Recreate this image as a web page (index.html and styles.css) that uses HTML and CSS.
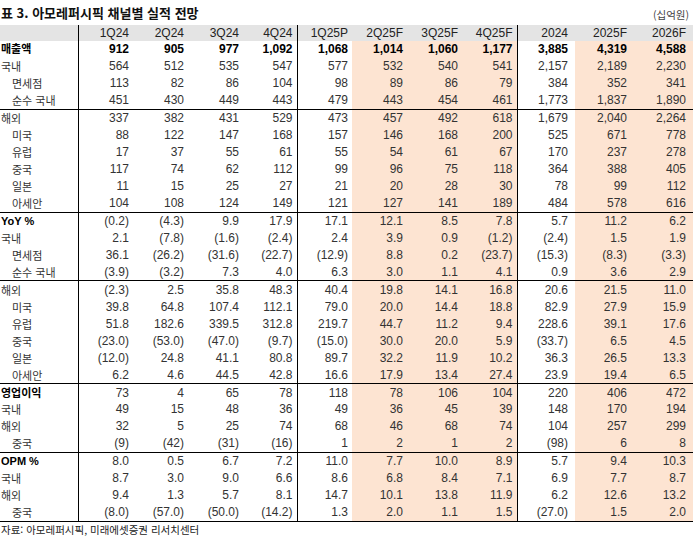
FILE: index.html
```html
<!DOCTYPE html>
<html lang="ko">
<head>
<meta charset="utf-8">
<link rel="stylesheet" href="styles.css">
</head>
<body>
<div class="top">
  <div class="title">표 3. 아모레퍼시픽 채널별 실적 전망</div>
  <div class="unit">(십억원)</div>
</div>
<table class="tbl">
  <colgroup>
    <col class="c-lb"><col class="c-a"><col class="c-a"><col class="c-a"><col class="c-a4">
    <col class="c-a"><col class="c-a"><col class="c-a"><col class="c-a">
    <col class="c-y1"><col class="c-y"><col class="c-y">
  </colgroup>
  <thead>
    <tr><th class="lb vr"></th><th>1Q24</th><th>2Q24</th><th>3Q24</th><th class="vr">4Q24</th><th>1Q25P</th><th>2Q25F</th><th>3Q25F</th><th class="vr">4Q25F</th><th class="yr">2024</th><th class="yr">2025F</th><th class="yr">2026F</th></tr>
  </thead>
  <tbody>
    <tr class="bv"><td class="lb vr b">매출액</td><td>912</td><td>905</td><td>977</td><td class="vr">1,092</td><td>1,068</td><td class="pe">1,014</td><td class="pe">1,060</td><td class="pe vr">1,177</td><td class="yr">3,885</td><td class="pe yr">4,319</td><td class="pe yr">4,588</td></tr>
    <tr><td class="lb vr">국내</td><td>564</td><td>512</td><td>535</td><td class="vr">547</td><td>577</td><td class="pe">532</td><td class="pe">540</td><td class="pe vr">541</td><td class="yr">2,157</td><td class="pe yr">2,189</td><td class="pe yr">2,230</td></tr>
    <tr><td class="lb vr in">면세점</td><td>113</td><td>82</td><td>86</td><td class="vr">104</td><td>98</td><td class="pe">89</td><td class="pe">86</td><td class="pe vr">79</td><td class="yr">384</td><td class="pe yr">352</td><td class="pe yr">341</td></tr>
    <tr class="sep"><td class="lb vr in">순수 국내</td><td>451</td><td>430</td><td>449</td><td class="vr">443</td><td>479</td><td class="pe">443</td><td class="pe">454</td><td class="pe vr">461</td><td class="yr">1,773</td><td class="pe yr">1,837</td><td class="pe yr">1,890</td></tr>
    <tr><td class="lb vr">해외</td><td>337</td><td>382</td><td>431</td><td class="vr">529</td><td>473</td><td class="pe">457</td><td class="pe">492</td><td class="pe vr">618</td><td class="yr">1,679</td><td class="pe yr">2,040</td><td class="pe yr">2,264</td></tr>
    <tr><td class="lb vr in">미국</td><td>88</td><td>122</td><td>147</td><td class="vr">168</td><td>157</td><td class="pe">146</td><td class="pe">168</td><td class="pe vr">200</td><td class="yr">525</td><td class="pe yr">671</td><td class="pe yr">778</td></tr>
    <tr><td class="lb vr in">유럽</td><td>17</td><td>37</td><td>55</td><td class="vr">61</td><td>55</td><td class="pe">54</td><td class="pe">61</td><td class="pe vr">67</td><td class="yr">170</td><td class="pe yr">237</td><td class="pe yr">278</td></tr>
    <tr><td class="lb vr in">중국</td><td>117</td><td>74</td><td>62</td><td class="vr">112</td><td>99</td><td class="pe">96</td><td class="pe">75</td><td class="pe vr">118</td><td class="yr">364</td><td class="pe yr">388</td><td class="pe yr">405</td></tr>
    <tr><td class="lb vr in">일본</td><td>11</td><td>15</td><td>25</td><td class="vr">27</td><td>21</td><td class="pe">20</td><td class="pe">28</td><td class="pe vr">30</td><td class="yr">78</td><td class="pe yr">99</td><td class="pe yr">112</td></tr>
    <tr class="sep"><td class="lb vr in">아세안</td><td>104</td><td>108</td><td>124</td><td class="vr">149</td><td>121</td><td class="pe">127</td><td class="pe">141</td><td class="pe vr">189</td><td class="yr">484</td><td class="pe yr">578</td><td class="pe yr">616</td></tr>

    <tr><td class="lb vr b">YoY %</td><td>(0.2)</td><td>(4.3)</td><td>9.9</td><td class="vr">17.9</td><td>17.1</td><td class="pe">12.1</td><td class="pe">8.5</td><td class="pe vr">7.8</td><td class="yr">5.7</td><td class="pe yr">11.2</td><td class="pe yr">6.2</td></tr>
    <tr><td class="lb vr">국내</td><td>2.1</td><td>(7.8)</td><td>(1.6)</td><td class="vr">(2.4)</td><td>2.4</td><td class="pe">3.9</td><td class="pe">0.9</td><td class="pe vr">(1.2)</td><td class="yr">(2.4)</td><td class="pe yr">1.5</td><td class="pe yr">1.9</td></tr>
    <tr><td class="lb vr in">면세점</td><td>36.1</td><td>(26.2)</td><td>(31.6)</td><td class="vr">(22.7)</td><td>(12.9)</td><td class="pe">8.8</td><td class="pe">0.2</td><td class="pe vr">(23.7)</td><td class="yr">(15.3)</td><td class="pe yr">(8.3)</td><td class="pe yr">(3.3)</td></tr>
    <tr class="sep"><td class="lb vr in">순수 국내</td><td>(3.9)</td><td>(3.2)</td><td>7.3</td><td class="vr">4.0</td><td>6.3</td><td class="pe">3.0</td><td class="pe">1.1</td><td class="pe vr">4.1</td><td class="yr">0.9</td><td class="pe yr">3.6</td><td class="pe yr">2.9</td></tr>
    <tr><td class="lb vr">해외</td><td>(2.3)</td><td>2.5</td><td>35.8</td><td class="vr">48.3</td><td>40.4</td><td class="pe">19.8</td><td class="pe">14.1</td><td class="pe vr">16.8</td><td class="yr">20.6</td><td class="pe yr">21.5</td><td class="pe yr">11.0</td></tr>
    <tr><td class="lb vr in">미국</td><td>39.8</td><td>64.8</td><td>107.4</td><td class="vr">112.1</td><td>79.0</td><td class="pe">20.0</td><td class="pe">14.4</td><td class="pe vr">18.8</td><td class="yr">82.9</td><td class="pe yr">27.9</td><td class="pe yr">15.9</td></tr>
    <tr><td class="lb vr in">유럽</td><td>51.8</td><td>182.6</td><td>339.5</td><td class="vr">312.8</td><td>219.7</td><td class="pe">44.7</td><td class="pe">11.2</td><td class="pe vr">9.4</td><td class="yr">228.6</td><td class="pe yr">39.1</td><td class="pe yr">17.6</td></tr>
    <tr><td class="lb vr in">중국</td><td>(23.0)</td><td>(53.0)</td><td>(47.0)</td><td class="vr">(9.7)</td><td>(15.0)</td><td class="pe">30.0</td><td class="pe">20.0</td><td class="pe vr">5.9</td><td class="yr">(33.7)</td><td class="pe yr">6.5</td><td class="pe yr">4.5</td></tr>
    <tr><td class="lb vr in">일본</td><td>(12.0)</td><td>24.8</td><td>41.1</td><td class="vr">80.8</td><td>89.7</td><td class="pe">32.2</td><td class="pe">11.9</td><td class="pe vr">10.2</td><td class="yr">36.3</td><td class="pe yr">26.5</td><td class="pe yr">13.3</td></tr>
    <tr class="sep"><td class="lb vr in">아세안</td><td>6.2</td><td>4.6</td><td>44.5</td><td class="vr">42.8</td><td>16.6</td><td class="pe">17.9</td><td class="pe">13.4</td><td class="pe vr">27.4</td><td class="yr">23.9</td><td class="pe yr">19.4</td><td class="pe yr">6.5</td></tr>

    <tr><td class="lb vr b">영업이익</td><td>73</td><td>4</td><td>65</td><td class="vr">78</td><td>118</td><td class="pe">78</td><td class="pe">106</td><td class="pe vr">104</td><td class="yr">220</td><td class="pe yr">406</td><td class="pe yr">472</td></tr>
    <tr><td class="lb vr">국내</td><td>49</td><td>15</td><td>48</td><td class="vr">36</td><td>49</td><td class="pe">36</td><td class="pe">45</td><td class="pe vr">39</td><td class="yr">148</td><td class="pe yr">170</td><td class="pe yr">194</td></tr>
    <tr><td class="lb vr">해외</td><td>32</td><td>5</td><td>25</td><td class="vr">74</td><td>68</td><td class="pe">46</td><td class="pe">68</td><td class="pe vr">74</td><td class="yr">104</td><td class="pe yr">257</td><td class="pe yr">299</td></tr>
    <tr class="sep"><td class="lb vr in">중국</td><td>(9)</td><td>(42)</td><td>(31)</td><td class="vr">(16)</td><td>1</td><td class="pe">2</td><td class="pe">1</td><td class="pe vr">2</td><td class="yr">(98)</td><td class="pe yr">6</td><td class="pe yr">8</td></tr>

    <tr><td class="lb vr b">OPM %</td><td>8.0</td><td>0.5</td><td>6.7</td><td class="vr">7.2</td><td>11.0</td><td class="pe">7.7</td><td class="pe">10.0</td><td class="pe vr">8.9</td><td class="yr">5.7</td><td class="pe yr">9.4</td><td class="pe yr">10.3</td></tr>
    <tr><td class="lb vr">국내</td><td>8.7</td><td>3.0</td><td>9.0</td><td class="vr">6.6</td><td>8.6</td><td class="pe">6.8</td><td class="pe">8.4</td><td class="pe vr">7.1</td><td class="yr">6.9</td><td class="pe yr">7.7</td><td class="pe yr">8.7</td></tr>
    <tr><td class="lb vr">해외</td><td>9.4</td><td>1.3</td><td>5.7</td><td class="vr">8.1</td><td>14.7</td><td class="pe">10.1</td><td class="pe">13.8</td><td class="pe vr">11.9</td><td class="yr">6.2</td><td class="pe yr">12.6</td><td class="pe yr">13.2</td></tr>
    <tr class="sep"><td class="lb vr in">중국</td><td>(8.0)</td><td>(57.0)</td><td>(50.0)</td><td class="vr">(14.2)</td><td>1.3</td><td class="pe">2.0</td><td class="pe">1.1</td><td class="pe vr">1.5</td><td class="yr">(27.0)</td><td class="pe yr">1.5</td><td class="pe yr">2.0</td></tr>
  </tbody>
</table>
<div class="src">자료: 아모레퍼시픽, 미래에셋증권 리서치센터</div>
</body>
</html>
```

FILE: styles.css
```css
body {
  margin: 0;
  width: 693px;
  background: #fff;
  color: #222;
  font-family: "Liberation Sans Narrow", "Liberation Sans", "Noto Sans CJK KR", sans-serif;
}
.top {
  display: flex;
  justify-content: space-between;
  align-items: flex-end;
  height: 25px;
}
.title {
  font-family: "Noto Sans CJK KR", sans-serif;
  font-weight: bold;
  font-size: 13px;
  line-height: 16px;
  color: #111;
  padding-left: 1px;
  padding-bottom: 4px;
}
.unit {
  font-family: "Noto Sans CJK KR", sans-serif;
  font-size: 10.5px;
  line-height: 14px;
  color: #444;
  padding-right: 4px;
  padding-bottom: 3px;
}
.tbl {
  width: 693px;
  table-layout: fixed;
  border-collapse: collapse;
  border-spacing: 0;
}
.c-lb { width: 78px; }
.c-a { width: 55px; }
.c-a4 { width: 54px; }
.c-y1 { width: 58px; }
.c-y { width: 59px; }
.tbl th {
  background: #e4e4e4;
  height: 16px;
  padding: 0 4px 0 0;
  font-weight: normal;
  font-size: 12px;
  line-height: 16px;
  text-align: right;
  color: #222;
}
.tbl td {
  height: 16.96px;
  padding: 0 4px 0 0;
  font-size: 12px;
  line-height: 16px;
  text-align: right;
  white-space: nowrap;
  color: #333;
}
.tbl .yr { padding-right: 7px; }
.tbl .lb {
  text-align: left;
  padding: 0 0 0 1px;
  font-family: "Noto Sans CJK KR", sans-serif;
  font-size: 11px;
  color: #333;
}
.tbl .in { padding-left: 12px; }
.tbl .b {
  font-family: "Liberation Sans", "Noto Sans CJK KR", sans-serif;
  font-weight: bold;
  color: #000;
}
.tbl .vr { border-right: 1px solid #000; }
.tbl .pe { background: #fde4d2; }
.bv td { font-weight: bold; color: #000; }
.sep td { border-bottom: 1px solid #000; }
.src {
  font-family: "Noto Sans CJK KR", sans-serif;
  font-size: 10.5px;
  line-height: 13px;
  color: #222;
  padding-top: 1px;
  padding-left: 1px;
}
```
